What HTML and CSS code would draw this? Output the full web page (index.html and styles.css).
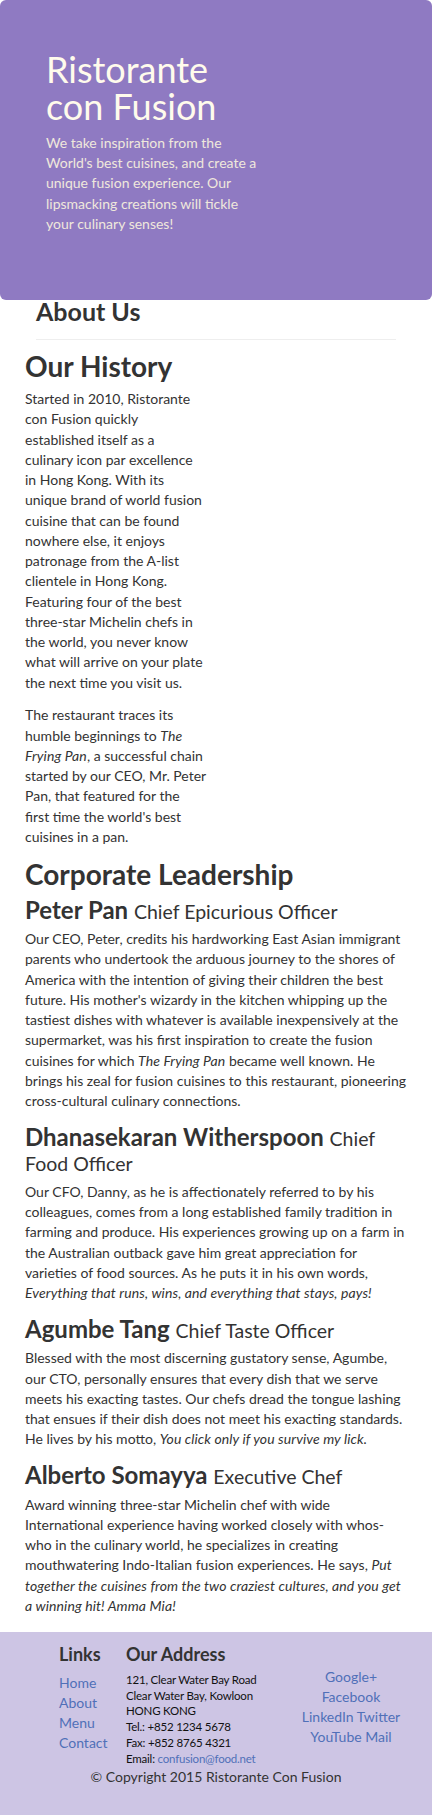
FILE: index.html
```html
<!DOCTYPE html>
<html lang="en">
<head>
<meta charset="utf-8">
<title>Ristorante con Fusion: About Us</title>
<link rel="stylesheet" href="styles.css">
</head>
<body>
<header class="jumbotron">
  <div class="jumbo-text">
    <h1 class="brand">Ristorante con Fusion</h1>
    <p class="tagline">We take inspiration from the World's best cuisines, and create a unique fusion experience. Our lipsmacking creations will tickle your culinary senses!</p>
  </div>
</header>

<main class="content">
  <div class="page-title">
    <h2>About Us</h2>
    <hr class="rule">
  </div>

  <section class="history">
    <h2 class="section-title">Our History</h2>
    <p class="history-intro">Started in 2010, Ristorante con Fusion quickly established itself as a culinary icon par excellence in Hong Kong. With its unique brand of world fusion cuisine that can be found nowhere else, it enjoys patronage from the A-list clientele in Hong Kong. Featuring four of the best three-star Michelin chefs in the world, you never know what will arrive on your plate the next time you visit us.</p>
    <p>The restaurant traces its humble beginnings to <em>The Frying Pan</em>, a successful chain started by our CEO, Mr. Peter Pan, that featured for the first time the world's best cuisines in a pan.</p>
  </section>

  <section class="leadership">
    <h2 class="section-title">Corporate Leadership</h2>
    <h3 class="person">Peter Pan <small>Chief Epicurious Officer</small></h3>
    <p>Our CEO, Peter, credits his hardworking East Asian immigrant parents who undertook the arduous journey to the shores of America with the intention of giving their children the best future. His mother's wizardy in the kitchen whipping up the tastiest dishes with whatever is available inexpensively at the supermarket, was his first inspiration to create the fusion cuisines for which <em>The Frying Pan</em> became well known. He brings his zeal for fusion cuisines to this restaurant, pioneering cross-cultural culinary connections.</p>
    <h3 class="person">Dhanasekaran Witherspoon <small>Chief Food Officer</small></h3>
    <p>Our CFO, Danny, as he is affectionately referred to by his colleagues, comes from a long established family tradition in farming and produce. His experiences growing up on a farm in the Australian outback gave him great appreciation for varieties of food sources. As he puts it in his own words, <em>Everything that runs, wins, and everything that stays, pays!</em></p>
    <h3 class="person">Agumbe Tang <small>Chief Taste Officer</small></h3>
    <p>Blessed with the most discerning gustatory sense, Agumbe, our CTO, personally ensures that every dish that we serve meets his exacting tastes. Our chefs dread the tongue lashing that ensues if their dish does not meet his exacting standards. He lives by his motto, <em>You click only if you survive my lick.</em></p>
    <h3 class="person">Alberto Somayya <small>Executive Chef</small></h3>
    <p>Award winning three-star Michelin chef with wide International experience having worked closely with whos-who in the culinary world, he specializes in creating mouthwatering Indo-Italian fusion experiences. He says, <em>Put together the cuisines from the two craziest cultures, and you get a winning hit! Amma Mia!</em></p>
  </section>
</main>

<footer class="footer">
  <div class="footer-cols">
    <div class="links">
      <h5 class="footer-title">Links</h5>
      <ul class="link-list">
        <li><a href="#">Home</a></li>
        <li><a href="#">About</a></li>
        <li><a href="#">Menu</a></li>
        <li><a href="#">Contact</a></li>
      </ul>
    </div>
    <div class="address">
      <h5 class="footer-title">Our Address</h5>
      <address>
        121, Clear Water Bay Road<br>
        Clear Water Bay, Kowloon<br>
        HONG KONG<br>
        Tel.: +852 1234 5678<br>
        Fax: +852 8765 4321<br>
        Email: <a href="#">confusion@food.net</a>
      </address>
    </div>
    <div class="social">
      <a href="#">Google+</a>
      <a href="#">Facebook</a>
      <span><a href="#">LinkedIn</a> <a href="#">Twitter</a></span>
      <span><a href="#">YouTube</a> <a href="#">Mail</a></span>
    </div>
  </div>
  <p class="copyright">© Copyright 2015 Ristorante Con Fusion</p>
</footer>
</body>
</html>
```

FILE: styles.css
```css
* { box-sizing: border-box; }

html, body {
  margin: 0;
  padding: 0;
}

body {
  min-height: 100vh;
  display: flex;
  flex-direction: column;
  font-family: Lato, "Liberation Sans", sans-serif;
  font-size: 14px;
  line-height: 20.25px;
  color: #333;
  background: #fff;
}

a { color: #5070b8; text-decoration: none; }

em { letter-spacing: 0.1px; }

/* Jumbotron */
.jumbotron {
  flex: none;
  height: 300px;
  background: #8f7ac2;
  border-radius: 6px;
  padding: 51px 0 0 46px;
}

.jumbo-text { width: 215px; }

.brand {
  margin: 0;
  font-size: 36px;
  line-height: 37px;
  font-weight: 400;
  color: #fffbec;
}

.tagline {
  margin: 8px 0 0;
  font-size: 14px;
  line-height: 20.2px;
  font-weight: 400;
  color: #efe8dc;
}

/* Content */
.content { padding: 0 25px; }

.page-title { padding: 0 11px; }

.page-title h2 {
  margin: 1px 0 0;
  font-size: 25px;
  line-height: 20px;
  font-weight: 700;
}

.rule {
  margin: 18px 0 0;
  border: 0;
  border-top: 1px solid #eee;
}

.section-title {
  margin: 10px 0 6px;
  font-size: 28px;
  line-height: 33px;
  font-weight: 700;
}

.history { width: 182px; }

.history p { margin: 0 0 12.5px; }

.history p:last-child { margin-bottom: 10.6px; }

.history .history-intro { padding-right: 2px; }

.leadership .section-title { margin-top: 0; }

.person {
  margin: 0 0 7px;
  font-size: 24px;
  line-height: 25.5px;
  font-weight: 700;
}

.person small {
  font-size: 19.5px;
  line-height: 20px;
  font-weight: 400;
}

.leadership p { margin: 0 0 12.5px; }

/* Footer */
.footer {
  flex: 1 0 auto;
  margin-top: 3.5px;
  background: #cdc5e4;
  padding: 13px 0 20px;
}

.footer-cols {
  display: grid;
  grid-template-columns: 67px 165px 120px;
  padding-left: 59px;
}

.footer-title {
  margin: 0;
  font-size: 18px;
  line-height: 19.8px;
  font-weight: 700;
}

.link-list {
  list-style: none;
  margin: 8px 0 0;
  padding: 0;
  font-size: 14px;
  line-height: 20px;
}

.address address {
  margin: 7px 0 0;
  font-style: normal;
  font-size: 11.5px;
  letter-spacing: -0.2px;
  line-height: 15.8px;
  color: #111;
}

.social {
  display: flex;
  flex-direction: column;
  align-items: center;
  padding-top: 21.5px;
  font-size: 14px;
  line-height: 20px;
}

.copyright {
  margin: 0;
  text-align: center;
  font-size: 14px;
  line-height: 20px;
}
```
